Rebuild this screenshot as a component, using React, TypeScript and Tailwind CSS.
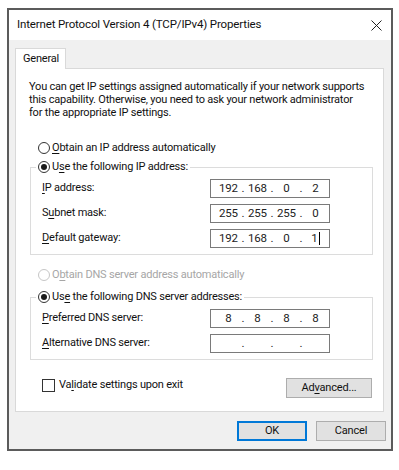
import React from "react";

const font = { fontFamily: 'Roboto, "Noto Sans", sans-serif' };

function U({ children }: { children: React.ReactNode }) {
  return <span className="underline underline-offset-2 decoration-[1px]">{children}</span>;
}

function Radio({ checked, disabled }: { checked?: boolean; disabled?: boolean }) {
  return (
    <span
      className={`flex h-[12px] w-[12px] shrink-0 items-center justify-center rounded-full border bg-white ${
        disabled ? "border-[#c6c6c6]" : "border-[#333333]"
      }`}
    >
      {checked && <span className="h-[6px] w-[6px] rounded-full bg-[#1a1a1a]" />}
    </span>
  );
}

function IpBox({ parts, caret }: { parts: string[]; caret?: boolean }) {
  return (
    <div className="flex h-[19px] w-[120px] items-center border border-[#7a7a7a] bg-white pl-[6px] text-[11.5px] text-[#222]">
      {parts.map((p, i) => (
        <React.Fragment key={i}>
          <span className="flex w-[23px] items-center justify-center">
            {p}
            {caret && i === 3 && <span className="ml-[1px] h-[13px] w-[1px] bg-black" />}
          </span>
          {i < 3 && <span className="w-[6px] text-center">.</span>}
        </React.Fragment>
      ))}
    </div>
  );
}

function Field({ label, parts, caret }: { label: React.ReactNode; parts: string[]; caret?: boolean }) {
  return (
    <div className="flex items-center">
      <span className="w-[168px]">{label}</span>
      <IpBox parts={parts} caret={caret} />
    </div>
  );
}

function Group({ legend, children }: { legend: React.ReactNode; children: React.ReactNode }) {
  return (
    <fieldset className="ml-[14px] mr-[10px] border border-[#dcdcdc] p-0">
      <legend className="ml-[5px] flex h-[14px] items-center gap-[2px] px-[2px]">
        <Radio checked />
        <span>{legend}</span>
      </legend>
      <div className="flex flex-col gap-[6px] pb-[6px] pl-[11px] pt-[5px]">{children}</div>
    </fieldset>
  );
}

function Button({ children, primary, className = "" }: { children: React.ReactNode; primary?: boolean; className?: string }) {
  return (
    <button
      className={`flex h-[20px] items-center justify-center bg-[#e1e1e1] text-[#111] ${
        primary ? "border-2 border-[#0078d7]" : "border border-[#adadad]"
      } ${className}`}
    >
      {children}
    </button>
  );
}

export default function App() {
  return (
    <div className="h-[470px] w-[399px] bg-white pl-[7px] pt-[8px] text-[11px] tracking-[-0.2px] text-[#111]" style={font}>
      <div className="flex h-[443px] w-[386px] flex-col border-2 border-[#5b5b5b] bg-[#f0f0f0]">
        {/* title bar */}
        <div className="flex h-[30px] items-center justify-between bg-white pl-[8px] pr-[9px]">
          <span className="text-[11.5px] tracking-[-0.15px]">Internet Protocol Version 4 (TCP/IPv4) Properties</span>
          <svg width="11" height="11" viewBox="0 0 11 11" className="text-[#222]">
            <path d="M0.5 0.5 L10.5 10.5 M10.5 0.5 L0.5 10.5" stroke="currentColor" strokeWidth="1" />
          </svg>
        </div>

        {/* tab */}
        <div className="ml-[6px] mt-[8px] flex">
          <div className="relative z-10 -mb-[1px] flex h-[21px] w-[51px] items-center border border-b-0 border-[#d9d9d9] bg-white pl-[7px]">
            General
          </div>
        </div>

        {/* tab panel */}
        <div className="ml-[6px] mr-[7px] flex h-[344px] flex-col border border-[#d9d9d9] bg-white">
          <div className="whitespace-nowrap pl-[13px] pt-[11px]">
            <div className="h-[13px] leading-[13px]">
              You can get IP settings assigned automatically if your network supports
            </div>
            <div className="h-[13px] leading-[13px]">
              this capability. Otherwise, you need to ask your network administrator
            </div>
            <div className="h-[13px] leading-[13px]">for the appropriate IP settings.</div>
          </div>

          <div className="ml-[22px] mt-[22px] flex h-[14px] items-center gap-[2px]">
            <Radio />
            <span>
              <U>O</U>btain an IP address automatically
            </span>
          </div>

          <div className="mt-[5px]">
            <Group
              legend={
                <>
                  U<U>s</U>e the following IP address:
                </>
              }
            >
              <Field label={<><U>I</U>P address:</>} parts={["192", "168", "0", "2"]} />
              <Field label={<>S<U>u</U>bnet mask:</>} parts={["255", "255", "255", "0"]} />
              <Field label={<><U>D</U>efault gateway:</>} parts={["192", "168", "0", "1"]} caret />
            </Group>
          </div>

          <div className="ml-[22px] mt-[13px] flex h-[14px] items-center gap-[2px] text-[#a6a6a6]">
            <Radio disabled />
            <span>
              O<U>b</U>tain DNS server address automatically
            </span>
          </div>

          <div className="mt-[8px]">
            <Group
              legend={
                <>
                  Us<U>e</U> the following DNS server addresses:
                </>
              }
            >
              <Field label={<><U>P</U>referred DNS server:</>} parts={["8", "8", "8", "8"]} />
              <Field label={<><U>A</U>lternative DNS server:</>} parts={["", "", "", ""]} />
            </Group>
          </div>

          <div className="ml-[26px] mr-[11px] mt-[17px] flex items-start justify-between">
            <div className="flex items-center gap-[4px]">
              <span className="h-[13px] w-[13px] border border-[#333] bg-white" />
              <span>
                Va<U>l</U>idate settings upon exit
              </span>
            </div>
            <Button className="mt-[1px] w-[86px]">
              Ad<U>v</U>anced...
            </Button>
          </div>
        </div>

        {/* footer buttons */}
        <div className="mr-[5px] mt-[9px] flex justify-end gap-[9px]">
          <Button primary className="w-[70px]">
            OK
          </Button>
          <Button className="w-[70px]">Cancel</Button>
        </div>
      </div>
    </div>
  );
}
